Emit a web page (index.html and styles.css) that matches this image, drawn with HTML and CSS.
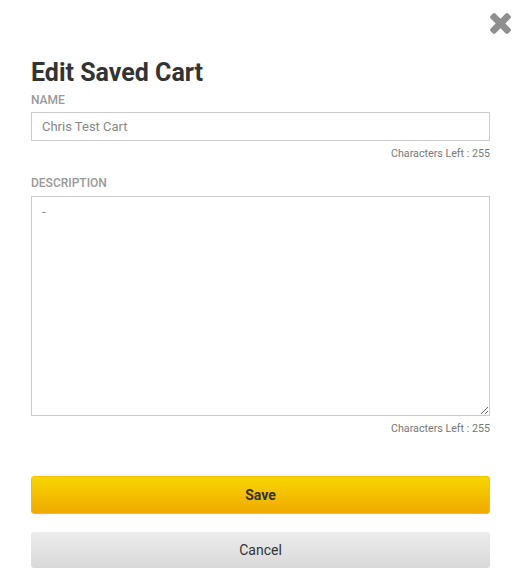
FILE: index.html
```html
<!doctype html>
<html lang="en">
<head>
    <meta charset="UTF-8">
    <meta name="viewport" content="width=device-width, initial-scale=1.0">
    <title>Edit Saved Cart</title>
    <link rel="stylesheet" href="styles.css">
</head>
<body>
    <div class="modal">
        <div class="modal-top">
            <button type="button" class="close-btn" aria-label="Close">
                <svg viewBox="110 366 1188 1188" width="21" height="21"><path d="M1298 1322q0 40-28 68l-136 136q-28 28-68 28t-68-28l-294-294-294 294q-28 28-68 28t-68-28l-136-136q-28-28-28-68t28-68l294-294-294-294q-28-28-28-68t28-68l136-136q28-28 68-28t68 28l294 294 294-294q28-28 68-28t68 28l136 136q28 28 28 68t-28 68l-294 294 294 294q28 28 28 68z"/></svg>
            </button>
        </div>
        <form class="modal-body">
            <h1 class="modal-title">Edit Saved Cart</h1>

            <label for="cart-name" class="field-label">NAME</label>
            <input type="text" id="cart-name" class="field-input" value="Chris Test Cart">
            <div class="chars-left">Characters Left : 255</div>

            <label for="cart-desc" class="field-label field-label-gap">DESCRIPTION</label>
            <textarea id="cart-desc" class="field-area">-</textarea>
            <div class="chars-left">Characters Left : 255</div>

            <div class="actions">
                <button type="submit" class="btn btn-save">Save</button>
                <button type="button" class="btn btn-cancel">Cancel</button>
            </div>
        </form>
    </div>
</body>
</html>
```

FILE: styles.css
```css
body {
    font-family: Roboto, "Liberation Sans", Arial, sans-serif;
    background-color: #fff;
    margin: 0;
    padding: 0;
    color: #333;
}
.modal {
    width: 526px;
}
.modal-top {
    display: flex;
    justify-content: flex-end;
    padding: 13px 15px 0 0;
}
.close-btn {
    background: none;
    border: none;
    padding: 0;
    cursor: pointer;
    display: flex;
    fill: #8f8f8f;
}
.modal-body {
    display: flex;
    flex-direction: column;
    padding: 0 36px 0 31px;
}
.modal-title {
    font-size: 25px;
    font-weight: 700;
    line-height: 28px;
    color: #333;
    margin: 25px 0 5px;
}
.field-label {
    display: block;
    font-size: 12px;
    font-weight: 500;
    line-height: 16px;
    color: #999;
    margin-bottom: 4px;
}
.field-label-gap {
    margin-top: 14px;
    margin-bottom: 5px;
}
.field-input, .field-area {
    font-family: Roboto, "Liberation Sans", Arial, sans-serif;
    font-size: 13px;
    color: #888;
    border: 1px solid #ccc;
    border-radius: 0;
    padding: 0 10px;
    box-sizing: border-box;
    width: 100%;
    margin: 0;
    outline: none;
}
.field-input {
    height: 29px;
}
.field-area {
    height: 220px;
    padding: 6px 10px;
    line-height: 18px;
    resize: vertical;
    display: block;
}
.chars-left {
    text-align: right;
    font-size: 10.7px;
    line-height: 15px;
    color: #777;
    margin-top: 5px;
}
.actions {
    display: flex;
    flex-direction: column;
    gap: 18px;
    margin-top: 40px;
}
.btn {
    width: 100%;
    font-family: Roboto, "Liberation Sans", Arial, sans-serif;
    font-size: 14px;
    color: #333;
    border-radius: 3px;
    cursor: pointer;
}
.btn-save {
    height: 38px;
    font-weight: 700;
    border: 1px solid #f3c300;
    background: linear-gradient(#f8d600, #f0a900);
}
.btn-cancel {
    height: 36px;
    font-weight: 400;
    border: none;
    background: linear-gradient(#ececec, #d9d9d9);
}
```
